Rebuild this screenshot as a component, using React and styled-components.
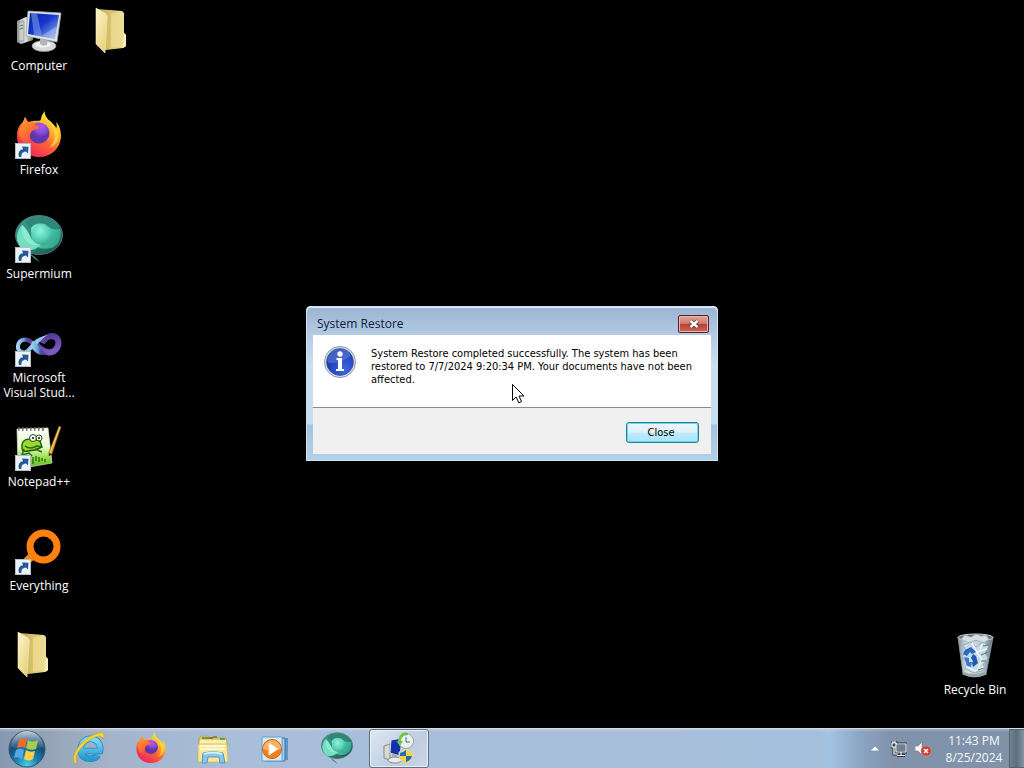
import React from "react";
import styled, { createGlobalStyle } from "styled-components";

const GlobalStyle = createGlobalStyle`
  *, *::before, *::after { box-sizing: border-box; }
  body {
    margin: 0;
    background: #000;
    font-family: "Open Sans", "Noto Sans", sans-serif;
    font-size: 12px;
  }
  button { font-family: inherit; font-size: inherit; }
`;

const Screen = styled.div`
  min-height: 100vh;
  display: flex;
  flex-direction: column;
  background: #000;
`;

const Desktop = styled.main`
  flex: 1;
  display: flex;
  justify-content: space-between;
  align-items: flex-end;
  padding-right: 10px;
`;

const IconGrid = styled.div`
  align-self: flex-start;
  display: grid;
  grid-auto-flow: column;
  grid-template-rows: repeat(7, 104px);
  grid-auto-columns: 78px;
`;

const Shortcut = styled.button`
  width: 78px;
  height: 104px;
  padding: 8px 0 0;
  border: 0;
  background: none;
  display: flex;
  flex-direction: column;
  align-items: center;
  gap: 2px;
  color: #fff;
  line-height: 15px;
  text-align: center;
`;

const IconBox = styled.span`
  position: relative;
  width: 48px;
  height: 48px;
  flex: none;
  svg { display: block; overflow: visible; }
`;

const LinkBadge = styled.svg`
  position: absolute;
  left: 0;
  bottom: 1px;
`;

const Label = styled.span`
  max-width: 76px;
`;

const WindowLayer = styled.div`
  position: fixed;
  inset: 0;
  padding-bottom: 1px;
  display: grid;
  place-items: center;
  pointer-events: none;
`;

const Pointer = styled.svg`
  position: absolute;
  left: 50%;
  top: 50%;
`;

const Dialog = styled.section`
  width: 412px;
  max-width: 100%;
  padding: 0 7px 7px;
  border-radius: 5px 5px 0 0;
  color: #000;
  pointer-events: auto;
  background: linear-gradient(#9ab3d3, #b3cae3 28px, #c9dff0 60px, #c6def0 118px, #a3c4de 119px, #b3d2e9);
  box-shadow: inset 0 0 0 1px #c9e3f5, inset 0 1px 0 1px #d8e8f6;
`;

const TitleBar = styled.header`
  height: 29px;
  padding: 6px 2px 0 4px;
  display: flex;
  justify-content: space-between;
  align-items: center;
`;

const Title = styled.h1`
  margin: 0;
  font-size: 12px;
  font-weight: 400;
  line-height: 16px;
  color: #0c1c38;
`;

const CloseX = styled.button`
  width: 31px;
  height: 18px;
  padding: 0;
  display: grid;
  place-items: center;
  border: 1px solid #4e2430;
  border-radius: 2px;
  background: linear-gradient(#e2a39a, #d27a6d 47%, #b63d32 50%, #cf665b);
  box-shadow: inset 0 0 0 1px #e9b5ad;
`;

const Message = styled.div`
  height: 72px;
  padding: 11px 11px 0;
  display: flex;
  gap: 15px;
  background: #fff;
`;

const MessageText = styled.p`
  margin: 0;
  padding-top: 1px;
  width: 324px;
  font-family: "DejaVu Sans Condensed", "Noto Sans", sans-serif;
  font-size: 11px;
  line-height: 13px;
`;

const Footer = styled.footer`
  height: 47px;
  padding: 2px 12px 0;
  display: flex;
  justify-content: flex-end;
  align-items: center;
  border-top: 1px solid #8b8b8b;
  background: #f0f0f0;
`;

const CloseButton = styled.button`
  width: 73px;
  height: 21px;
  padding: 0 3px 0 0;
  border: 1px solid #2f7d93;
  border-radius: 3px;
  font-family: "DejaVu Sans Condensed", "Noto Sans", sans-serif;
  font-size: 11px;
  line-height: 19px;
  color: #000;
  background: linear-gradient(#edf6fa, #def2fa 48%, #c3eafa 52%, #a9e4fa);
  box-shadow: inset 0 0 0 1px #5fdcf5;
`;

const Taskbar = styled.nav`
  height: 40px;
  display: flex;
  align-items: stretch;
  border-top: 1px solid #d2dbe3;
  background:
    linear-gradient(rgba(255,255,255,.22), rgba(255,255,255,0) 3px),
    linear-gradient(90deg, #8599b0 0, #95a4b6 50px, #a3b4cb 110px, #a8bed9 240px, #a5bedb 80%, #a3c3e3 81%, #8ba5c3 84%, #8093ab 87%, #8092a8 100%);
`;

const StartButton = styled.button`
  width: 54px;
  margin-right: 5px;
  padding: 0;
  border: 0;
  background: none;
  display: grid;
  place-items: center;
  svg { display: block; }
`;

const TaskList = styled.div`
  flex: 1;
  display: flex;
  gap: 2px;
`;

const TaskButton = styled.button`
  width: 60px;
  padding: 0;
  display: grid;
  place-items: center;
  border: 1px solid ${(p) => (p.$active ? "#5d7088" : "transparent")};
  border-radius: 3px;
  background: ${(p) => (p.$active ? "linear-gradient(135deg, #dfe7f1, #bfcde0 60%, #c9d6e6)" : "none")};
  box-shadow: ${(p) => (p.$active ? "inset 0 0 0 1px #e8f0f8" : "none")};
  svg { display: block; overflow: visible; }
`;

const Tray = styled.div`
  display: flex;
  align-items: center;
  color: #f4f8fc;
`;

const TrayButton = styled.button`
  width: 24px;
  height: 24px;
  padding: 0;
  border: 0;
  background: none;
  display: grid;
  place-items: center;
`;

const Clock = styled.time`
  width: 70px;
  margin-left: 4px;
  text-align: center;
  line-height: 17px;
`;

const ShowDesktop = styled.button`
  align-self: stretch;
  width: 15px;
  padding: 0;
  border: 1px solid #52646f;
  border-right: 0;
  background: linear-gradient(90deg, #71848f, #5a6f7a 45%, #607580 55%, #8295a3);
`;

const ShortcutArrow = () => (
  <LinkBadge width="16" height="16" viewBox="0 0 16 16" aria-hidden="true">
    <rect x="0.5" y="0.5" width="15" height="15" fill="#eef3f8" stroke="#b4bdc8" />
    <path d="M4 14C2.6 9.500 4.500 6.500 8 6.200L7 3.500L13.500 3.800L13 10.500L10.900 8.600C8 9 6 10.500 6.500 14Z" fill="#235b98" />
  </LinkBadge>
);

const Computer = ({ size = 48 }) => (
  <svg width={size} height={size} viewBox="0 0 48 48" aria-hidden="true">
    <defs>
      <linearGradient id="pcScreen" x1="0" y1="0" x2="1" y2="1">
        <stop offset="0" stopColor="#0b23a4" /><stop offset=".45" stopColor="#1436cc" /><stop offset="1" stopColor="#a8c2f2" />
      </linearGradient>
      <linearGradient id="pcTower"><stop stopColor="#8e9291" /><stop offset=".5" stopColor="#e3e5e0" /><stop offset="1" stopColor="#777b7b" /></linearGradient>
    </defs>
    <path d="M2 13L11 9L18 11V32L6 36L2 34Z" fill="url(#pcTower)" />
    <path d="M4 15L9 13V33L4 33Z" fill="#c9ccc8" stroke="#8b8f8e" strokeWidth=".7" />
    <path d="M5 18L8 17M5 21L8 20" stroke="#616666" />
    <ellipse cx="29" cy="38" rx="12" ry="5.500" fill="#d6dad8" stroke="#939998" strokeWidth=".7" />
    <ellipse cx="28" cy="36.500" rx="8" ry="3" fill="#f3f5f3" />
    <path d="M25 29H33L32 37Q28 39 25 36Z" fill="#b3b9b8" />
    <path d="M13 3L46 5L42 34L11 28Z" fill="#dfe4e6" stroke="#9ea5a8" strokeWidth=".8" />
    <path d="M15 5L44 7L40 31L13 26Z" fill="url(#pcScreen)" />
    <path d="M16 5L22 5.500L27 28.500L19 27Z" fill="#8aabf0" opacity=".5" />
    <path d="M26 28L44 17L40 31Z" fill="#cbdaf5" opacity=".4" />
  </svg>
);

const Folder = () => (
  <svg width="48" height="48" viewBox="0 0 48 48" aria-hidden="true">
    <defs>
      <linearGradient id="folderBack"><stop stopColor="#bfa650" /><stop offset=".45" stopColor="#d8c16c" /><stop offset="1" stopColor="#f3e5a3" /></linearGradient>
      <linearGradient id="folderFront" x2=".7" y2="1"><stop stopColor="#fdf6cf" /><stop offset="1" stopColor="#e7d17a" /></linearGradient>
    </defs>
    <path d="M4 1L29 3L31 5V25L33 27V38L30 40L13 42L5 37Z" fill="url(#folderBack)" />
    <path d="M18 6L28 4L29 38L18 40Z" fill="#ecdb90" opacity=".8" />
    <path d="M31 25L33 27V38L30 40Z" fill="#fbf3c4" />
    <path d="M3 0L13 6Q15 8 14 13L12 45L3 36Z" fill="url(#folderFront)" stroke="#f8efbe" strokeWidth=".6" />
  </svg>
);

const Firefox = ({ size = 48 }) => (
  <svg width={size} height={size} viewBox="0 0 48 48" aria-hidden="true">
    <defs>
      <linearGradient id="foxBody" x1=".85" y1=".05" x2=".25" y2=".95">
        <stop stopColor="#fff04d" /><stop offset=".3" stopColor="#ffbc2c" /><stop offset=".6" stopColor="#ff6334" /><stop offset="1" stopColor="#ed245e" />
      </linearGradient>
      <radialGradient id="foxGlobe" cx=".6" cy=".2"><stop stopColor="#bd53e1" /><stop offset=".6" stopColor="#8350de" /><stop offset="1" stopColor="#6235aa" /></radialGradient>
      <linearGradient id="foxHead" x2=".5" y2="1"><stop stopColor="#ffa42e" /><stop offset=".5" stopColor="#ff7a30" /><stop offset="1" stopColor="#f9444a" /></linearGradient>
    </defs>
    <path d="M30-1C29 4 32 7 36 10C38 12 40 14 41 17C42 15 42 13 41 10C45 14 46 19 46 25C45 37 36 45 24 45C11 45 2 36 2 24C2 17 4 13 8 10L10 5L13 10L18 9C22 8 25 10 26 7C26 4 28 1 30-1Z" fill="url(#foxBody)" />
    <circle cx="24" cy="21" r="10.500" fill="url(#foxGlobe)" />
    <path d="M10 5C11 8 13 10 15 11L18 10C19 13 25 14 24 16C23 18 19 17 17 19C13 23 15 30 20 33C12 35 5 29 4 21C4 15 8 12 10 5Z" fill="url(#foxHead)" />
    <path d="M29 1C28 7 35 9 38 16C41 23 40 30 34 36C43 33 46 25 41 15L35 9C31 6 31 3 29 1Z" fill="#ffdf3d" opacity=".7" />
  </svg>
);

const Supermium = ({ size = 48 }) => (
  <svg width={size} height={size} viewBox="0 0 48 48" aria-hidden="true">
    <defs>
      <linearGradient id="smBody" x2="1" y2="1"><stop stopColor="#3c9a8b" /><stop offset=".5" stopColor="#2d8c7c" /><stop offset="1" stopColor="#184a47" /></linearGradient>
      <linearGradient id="smFlow" x2="1" y2=".6"><stop stopColor="#7eeacb" /><stop offset="1" stopColor="#2fa58e" /></linearGradient>
      <radialGradient id="smCore" cx=".4" cy=".3" r=".8"><stop stopColor="#8ff3dc" /><stop offset=".55" stopColor="#55cfb4" /><stop offset="1" stopColor="#2b9c87" /></radialGradient>
    </defs>
    <ellipse cx="24" cy="19" rx="23.500" ry="19.500" fill="url(#smBody)" stroke="#56756f" strokeWidth="1" />
    <path d="M10 6Q18 0 28 1Q39 3 44 12Q36 16 29 8Q21 4 16 12Q13 10 10 6Z" fill="#2f8778" />
    <path d="M16 12Q20 6 30 8Q35 15 45 13Q48 27 37 32Q25 35 17 27Z" fill="url(#smFlow)" />
    <circle cx="27" cy="19" r="10.500" fill="url(#smCore)" />
    <path d="M7 9Q12 13 15 20Q18 28 26 29Q19 36 9 34Q2 30 2 20Q3 13 7 9Z" fill="#71dfc0" />
    <path d="M7 9Q12 13 15 20Q18 28 26 29Q14 31 9 22Q6 16 7 9Z" fill="#9cf3d7" opacity=".6" />
    <path d="M14 37Q19 39 25 46Q18 43 14 37Z" fill="#42776f" />
  </svg>
);

const VisualStudio = () => (
  <svg width="48" height="48" viewBox="0 0 48 48" aria-hidden="true">
    <defs>
      <linearGradient id="vsBand"><stop stopColor="#a4d3f3" /><stop offset=".35" stopColor="#6caee0" /><stop offset=".6" stopColor="#4c469f" /><stop offset="1" stopColor="#6941a3" /></linearGradient>
      <linearGradient id="vsLoop" y2="1" x2=".3"><stop stopColor="#4e398f" /><stop offset="1" stopColor="#7c57bd" /></linearGradient>
    </defs>
    <path d="M18 24C12 17 4 19 3 26C2 31 8 34 15 31" fill="none" stroke="url(#vsBand)" strokeWidth="4" />
    <path d="M27 23C31 15 40 14 43 20C45 27 39 34 32 32C28 31 24 28 21 24" fill="none" stroke="url(#vsLoop)" strokeWidth="6" />
    <path d="M8 32C19 34 24 19 33 15C27 16 22 18 18 22C15 25 13 29 8 32Z" fill="#93c7ed" />
    <path d="M17 21C23 22 25 31 33 34C25 37 20 33 16 27Z" fill="url(#vsBand)" />
  </svg>
);

const Notepad = () => (
  <svg width="48" height="48" viewBox="0 0 48 48" aria-hidden="true">
    <defs>
      <linearGradient id="npPage" y2="1" x2="0"><stop stopColor="#fff" /><stop offset=".5" stopColor="#e9f7c6" /><stop offset=".8" stopColor="#8fd737" /><stop offset="1" stopColor="#63b62c" /></linearGradient>
    </defs>
    <path d="M2 5L33 4L37 39L14 43L3 42Z" fill="url(#npPage)" stroke="#d8e6c6" strokeWidth=".7" />
    <path d="M4 3V7M8 3V7M12 3V7M16 3V7M20 3V7M24 3V7M28 3V7" stroke="#555b52" strokeWidth="1.500" />
    <path d="M5 5V8M9 5V8M13 5V8M17 5V8M21 5V8M25 5V8" stroke="#fff" />
    <path d="M7 24C6 16 13 13 17 17L19 15L25 17L27 23L20 26L13 27C9 28 7 27 7 24Z" fill="#9ad929" stroke="#1c5418" strokeWidth="1.400" />
    <circle cx="18" cy="14" r="3.500" fill="#f8fbe9" stroke="#254d25" />
    <circle cx="24" cy="14" r="3" fill="#f8fbe9" stroke="#254d25" />
    <path d="M18 13V15M24 13V15" stroke="#111" strokeWidth="1.500" />
    <path d="M10 22Q15 26 22 22L27 23M9 25L7 31L14 29L17 32M20 25L27 28" fill="none" stroke="#1f6b1b" strokeWidth="1.500" />
    <path d="M21 37V32M24 38V33M27 37V34M30 38V35M18 40V33" stroke="#267a23" strokeWidth="1.500" />
    <path d="M44 2L46 3L37 30L34 32L34 28Z" fill="#e6a426" stroke="#71511b" strokeWidth=".6" />
    <path d="M45 3L35 29" stroke="#ffe17a" strokeWidth="1" />
    <path d="M34 32V29L37 30Z" fill="#37281c" />
  </svg>
);

const Everything = () => (
  <svg width="48" height="48" viewBox="0 0 48 48" aria-hidden="true">
    <circle cx="28.500" cy="18.500" r="13.500" fill="none" stroke="#ff8110" strokeWidth="7" />
    <path d="M17 28L11 34" stroke="#ff8110" strokeWidth="8" />
  </svg>
);

const RecycleBin = () => (
  <svg width="48" height="48" viewBox="0 0 48 48" aria-hidden="true">
    <defs>
      <linearGradient id="binGlass"><stop stopColor="#7f8f99" /><stop offset=".25" stopColor="#dbe6ec" /><stop offset=".7" stopColor="#b8cad4" /><stop offset="1" stopColor="#637078" /></linearGradient>
    </defs>
    <path d="M7 5L12 42Q23 48 35 42L42 5Z" fill="url(#binGlass)" stroke="#9aa7ae" strokeWidth=".8" />
    <ellipse cx="24.500" cy="5.500" rx="17.500" ry="3.500" fill="#61707a" stroke="#cbd6dc" />
    <path d="M10 7L14 3L20 5L25 2L30 4L35 3L38 7L33 11L25 8L18 11Z" fill="#d5dfe3" stroke="#8c9ea8" strokeWidth=".6" />
    <path d="M12 13L20 10L25 15L32 10L38 14L34 21L37 26L32 33L34 38L23 41L14 37L16 30L11 25L15 19Z" fill="#c6dae3" stroke="#8ba2b0" strokeWidth=".8" />
    <path d="M21 11L26 20L36 17M25 20L31 27L27 36M15 34L24 39L33 35M31 12L29 19" fill="none" stroke="#edf6fa" strokeWidth="1.500" />
    <path d="M30 23L37 20M30 29L35 29M27 38L33 36M32 14L38 13" stroke="#5d7380" />
    <path d="M14 18L20 15L25 20L21 22L19 20L16 24L12 22Z" fill="#2c69c7" />
    <path d="M22 22L25 24L27 31L22 35L21 31L22 29L20 26Z" fill="#2158b7" />
    <path d="M13 25L18 26L18 30L21 30L20 35L16 34Z" fill="#377ad4" />
    <path d="M12 41Q23 46 35 41" fill="none" stroke="#9ca7aa" strokeWidth="3" />
  </svg>
);

const StartOrb = () => (
  <svg width="38" height="38" viewBox="0 0 38 38" aria-hidden="true">
    <defs>
      <radialGradient id="orb" cx=".5" cy=".95" r=".9"><stop stopColor="#45d4ee" /><stop offset=".35" stopColor="#1c80ae" /><stop offset=".7" stopColor="#164b77" /><stop offset="1" stopColor="#647d96" /></radialGradient>
      <linearGradient id="orbShine" x2="0" y2="1"><stop stopColor="#e2edf5" stopOpacity=".7" /><stop offset="1" stopColor="#7597b0" stopOpacity=".15" /></linearGradient>
    </defs>
    <circle cx="19" cy="19" r="18" fill="url(#orb)" stroke="#345873" />
    <path d="M3 17A16 16 0 0 1 35 17Q19 22 3 17Z" fill="url(#orbShine)" />
    <path d="M11 10Q15 7 19 9L17 18Q13 16 9 18Z" fill="#ee6a31" />
    <path d="M20 10Q24 13 30 10L28 19Q22 21 18 18Z" fill="#a3cf4d" />
    <path d="M8 20Q12 17 16 20L14 29Q10 26 6 28Z" fill="#54a8e4" />
    <path d="M18 20Q22 23 27 21L25 29Q21 32 16 29Z" fill="#ffd044" />
  </svg>
);

const InternetExplorer = () => (
  <svg width="34" height="34" viewBox="0 0 34 34" aria-hidden="true">
    <defs><linearGradient id="ieBlue" x2="0" y2="1"><stop stopColor="#7edaf8" /><stop offset="1" stopColor="#269bd2" /></linearGradient></defs>
    <path d="M26 23C23 28 11 29 9 20C7 10 15 6 20 7C27 8 29 14 28 19H10" fill="none" stroke="#2688b9" strokeWidth="6.500" />
    <path d="M26 23C23 28 11 29 9 20C7 10 15 6 20 7C27 8 29 14 28 19H10" fill="none" stroke="url(#ieBlue)" strokeWidth="5" />
    <path d="M3 31C-3 25 10 5 27 1C32 0 33 3 31 7C30 1 18 5 10 15C4 22 2 28 6 31Z" fill="#f7d933" stroke="#bea12a" strokeWidth=".6" />
  </svg>
);

const Explorer = () => (
  <svg width="34" height="34" viewBox="0 0 34 34" aria-hidden="true">
    <path d="M3 7L5 4H12L14 6H30L31 9V28H2Z" fill="#e4cb6d" stroke="#b79a48" strokeWidth=".8" />
    <path d="M4 8H30V26H3Z" fill="#f8edab" />
    <path d="M6 6H14M17 5H21M24 7H29" stroke="#659a53" strokeWidth="2" />
    <path d="M14 6H17" stroke="#ce5037" strokeWidth="2" />
    <path d="M2 12H31L32 30H2Z" fill="#f6e79d" stroke="#d1b75d" strokeWidth=".8" />
    <path d="M4 14H29M4 17H29" stroke="#fff9d1" strokeWidth="2" />
    <path d="M6 31L7 21Q17 18 27 21L29 31H24L23 25H12L11 31Z" fill="#8bc5e4" stroke="#5199c5" />
    <path d="M8 22Q17 19 26 22" fill="none" stroke="#d4f2fc" strokeWidth="2" />
  </svg>
);

const MediaPlayer = () => (
  <svg width="34" height="34" viewBox="0 0 34 34" aria-hidden="true">
    <path d="M9 6H30V28H9Z" fill="#6395c1" />
    <path d="M7 6H27V29H7Z" fill="#9fc9e5" stroke="#3779af" />
    <path d="M4 5H24V29H4Z" fill="#d3e9f6" stroke="#6aa2c8" />
    <circle cx="14" cy="17" r="9.500" fill="#ef8120" stroke="#c8661c" />
    <path d="M5 17A9 9 0 0 1 23 17Q14 20 5 17Z" fill="#f8b15c" />
    <path d="M11 11L20 17L11 23Z" fill="#fff" stroke="#f7dcbd" />
  </svg>
);

const RestoreApp = () => (
  <svg width="34" height="34" viewBox="0 0 34 34" aria-hidden="true">
    <path d="M2 14L8 12V28L2 26Z" fill="#d7dad3" stroke="#858c88" />
    <path d="M9 8L20 6L18 24L8 21Z" fill="#1231af" stroke="#d3dbe7" />
    <path d="M10 22H15V27H10Z" fill="#a9b2b3" />
    <ellipse cx="13" cy="28" rx="7" ry="3" fill="#e7ebe7" stroke="#858e8e" />
    <circle cx="24" cy="9" r="7.500" fill="#e9f2ed" stroke="#98aa9d" />
    <path d="M24 5V10H28" fill="none" stroke="#4a7464" />
    <path d="M26 1C19-1 16 5 17 10L14 9L18 14L21 9H19C19 6 21 3 26 3Z" fill="#73c541" />
    <path d="M24 17Q28 20 31 19Q32 28 24 32Q16 28 17 20Q21 20 24 17Z" fill="#f2d63b" stroke="#cad5e1" />
    <path d="M24 18V24H18V21Q22 20 24 18ZM24 24H30Q29 28 24 30Z" fill="#2967bd" />
  </svg>
);

const InfoIcon = () => (
  <svg width="32" height="32" viewBox="0 0 32 32" role="img" aria-label="Information">
    <defs><radialGradient id="infoBlue" cx=".65" cy=".75" r=".8"><stop stopColor="#3e68e2" /><stop offset=".6" stopColor="#2446c1" /><stop offset="1" stopColor="#172d96" /></radialGradient></defs>
    <circle cx="16" cy="16" r="15.500" fill="#dfe3e8" stroke="#8d98aa" />
    <circle cx="16" cy="16" r="13.500" fill="url(#infoBlue)" stroke="#3751a3" strokeWidth=".7" />
    <path d="M4 17A12 12 0 0 1 27 10Q18 17 4 17Z" fill="#7793df" opacity=".45" />
    <circle cx="16" cy="8" r="2.700" fill="#fff" />
    <path d="M12.500 12H18V23H20V25H12V23H14V14H12.500Z" fill="#fff" />
  </svg>
);

const shortcuts = [
  { name: "Computer", Icon: Computer },
  { name: "Firefox", Icon: Firefox, linked: true },
  { name: "Supermium", Icon: Supermium, linked: true },
  { name: "Microsoft Visual Stud...", Icon: VisualStudio, linked: true },
  { name: "Notepad++", Icon: Notepad, linked: true },
  { name: "Everything", Icon: Everything, linked: true },
  { name: "", Icon: Folder },
  { name: "", Icon: Folder },
];

const tasks = [
  { name: "Internet Explorer", icon: <InternetExplorer /> },
  { name: "Firefox", icon: <Firefox size={32} /> },
  { name: "Windows Explorer", icon: <Explorer /> },
  { name: "Windows Media Player", icon: <MediaPlayer /> },
  { name: "Supermium", icon: <Supermium size={32} /> },
  { name: "System Restore", icon: <RestoreApp />, active: true },
];

const DesktopIcon = ({ name, Icon, linked }) => (
  <Shortcut type="button" aria-label={name || "Folder"}>
    <IconBox>
      <Icon />
      {linked && <ShortcutArrow />}
    </IconBox>
    {name && <Label>{name}</Label>}
  </Shortcut>
);

export default function App() {
  return (
    <Screen>
      <GlobalStyle />
      <Desktop>
        <IconGrid>
          {shortcuts.map((item, i) => <DesktopIcon key={i} {...item} />)}
        </IconGrid>
        <DesktopIcon name="Recycle Bin" Icon={RecycleBin} />
      </Desktop>

      <Taskbar aria-label="Taskbar">
        <StartButton type="button" aria-label="Start"><StartOrb /></StartButton>
        <TaskList>
          {tasks.map((t) => (
            <TaskButton key={t.name} type="button" aria-label={t.name} $active={t.active}>{t.icon}</TaskButton>
          ))}
        </TaskList>
        <Tray>
          <TrayButton type="button" aria-label="Show hidden icons">
            <svg width="8" height="5" viewBox="0 0 8 5"><path d="M0 4.500L4 0.500L8 4.500Z" fill="#fff" /></svg>
          </TrayButton>
          <TrayButton type="button" aria-label="Network">
            <svg width="16" height="16" viewBox="0 0 16 16" fill="none">
              <path d="M5 3H15V11H5ZM10 11V14M6 14.500H14M3 6V13H7M1 2H5V6H1ZM2 0V2M4 0V2" stroke="#26333d" strokeWidth="3" />
              <path d="M6 4H14V10H6Z" fill="#6c8191" />
              <path d="M5 3H15V11H5ZM10 11V14M6 14.500H14M3 6V13H7M1 2H5V6H1ZM2 0V2M4 0V2" stroke="#fff" strokeWidth="1.200" />
            </svg>
          </TrayButton>
          <TrayButton type="button" aria-label="Volume muted">
            <svg width="16" height="16" viewBox="0 0 16 16">
              <path d="M0 5H3L7 1V14L3 10H0Z" fill="#fff" stroke="#65717c" strokeWidth=".6" />
              <circle cx="11" cy="10" r="5" fill="#d33b31" stroke="#ea877d" strokeWidth=".6" />
              <path d="M9 8L13 12M13 8L9 12" stroke="#fff" strokeWidth="1.500" />
            </svg>
          </TrayButton>
          <Clock dateTime="2024-08-25T23:43">11:43 PM<br />8/25/2024</Clock>
          <ShowDesktop type="button" aria-label="Show desktop" />
        </Tray>
      </Taskbar>

      <WindowLayer>
        <Dialog role="dialog" aria-labelledby="dialog-title">
          <TitleBar>
            <Title id="dialog-title">System Restore</Title>
            <CloseX type="button" aria-label="Close window">
              <svg width="12" height="10" viewBox="0 0 12 10">
                <path d="M2.500 2L9.500 8M9.500 2L2.500 8" stroke="#5b3440" strokeWidth="4" />
                <path d="M2.500 2L9.500 8M9.500 2L2.500 8" stroke="#fff" strokeWidth="2.400" />
              </svg>
            </CloseX>
          </TitleBar>
          <Message>
            <InfoIcon />
            <MessageText>
              System Restore completed successfully. The system has been restored to 7/7/2024 9:20:34 PM. Your documents have not been affected.
            </MessageText>
          </Message>
          <Footer>
            <CloseButton type="button">Close</CloseButton>
          </Footer>
        </Dialog>
        <Pointer width="13" height="20" viewBox="0 0 13 20" aria-hidden="true">
          <path d="M0.500 0.500V16.500L4.200 13L6.800 18.800L9.500 17.600L7 12H12Z" fill="#fff" stroke="#000" />
        </Pointer>
      </WindowLayer>
    </Screen>
  );
}
